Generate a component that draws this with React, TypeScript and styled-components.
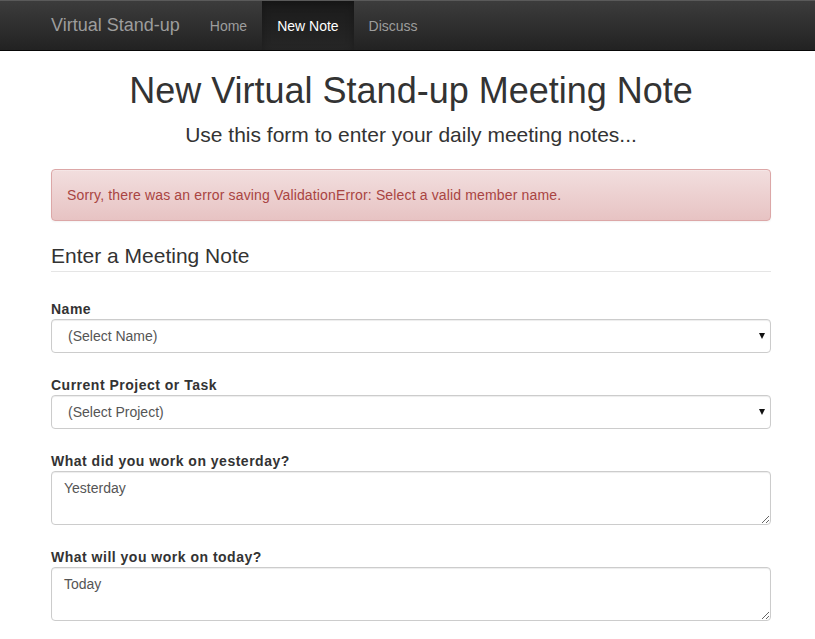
import React from "react";
import styled, { createGlobalStyle } from "styled-components";

const Global = createGlobalStyle`
  html, body { margin: 0; padding: 0; background: #fff; }
  body {
    font-family: "Liberation Sans", Arial, Helvetica, sans-serif;
    font-size: 14px;
    line-height: 20px;
    color: #333;
  }
  * { box-sizing: border-box; }
`;

const Navbar = styled.nav`
  height: 51px;
  background-image: linear-gradient(to bottom, #3c3c3c 0%, #222 100%);
  border-top: 1px solid #5a5a5a;
  border-bottom: 1px solid #080808;
`;

const NavInner = styled.div`
  display: flex;
  align-items: stretch;
  height: 49px;
  margin-left: 36px;
`;

const Brand = styled.a`
  padding: 14px 15px 15px;
  font-size: 18px;
  line-height: 20px;
  color: #9d9d9d;
  text-decoration: none;
`;

const NavLinks = styled.ul`
  display: flex;
  list-style: none;
  margin: 0;
  padding: 0;
`;

const NavLink = styled.a<{ $active?: boolean }>`
  display: block;
  padding: 15px 15px 14px;
  font-size: 14px;
  line-height: 20px;
  text-decoration: none;
  color: ${(p) => (p.$active ? "#fff" : "#9d9d9d")};
  background: ${(p) =>
    p.$active ? "linear-gradient(to bottom, #1b1b1b 0%, #262626 100%)" : "transparent"};
  box-shadow: ${(p) => (p.$active ? "inset 0 3px 9px rgba(0,0,0,.25)" : "none")};
  height: 49px;
`;

const Container = styled.main`
  width: 720px;
  margin-left: 51px;
`;

const Title = styled.h1`
  margin: 20px 0 0;
  font-size: 36px;
  font-weight: 400;
  line-height: 40px;
  text-align: center;
  color: #333;
`;

const Lead = styled.p`
  margin: 10px 0 0;
  font-size: 21px;
  line-height: 28px;
  text-align: center;
  color: #333;
`;

const Alert = styled.div`
  margin-top: 20px;
  padding: 15px;
  border: 1px solid #dca7a7;
  border-radius: 4px;
  background-image: linear-gradient(to bottom, #f2dede 0%, #e7c3c3 100%);
  color: #a94442;
  font-size: 14px;
  line-height: 20px;
  letter-spacing: 0.15px;
  box-shadow: inset 0 1px 0 rgba(255,255,255,.25), 0 1px 2px rgba(0,0,0,.05);
`;

const Fieldset = styled.fieldset`
  margin: 20px 0 0;
  padding: 0;
  border: 0;
  min-width: 0;
`;

const Legend = styled.legend`
  display: block;
  width: 100%;
  padding: 0;
  margin-bottom: 27px;
  font-size: 21px;
  line-height: 30px;
  color: #333;
  border-bottom: 1px solid #e5e5e5;
`;

const FormGroup = styled.div`
  margin-bottom: 22px;
`;

const Label = styled.label`
  display: block;
  margin-bottom: 0;
  font-weight: 700;
  font-size: 14px;
  line-height: 20px;
  letter-spacing: 0.5px;
  color: #333;
`;

const SelectWrap = styled.div`
  position: relative;
  &::after {
    content: "";
    position: absolute;
    right: 6px;
    top: 14px;
    border-left: 3.5px solid transparent;
    border-right: 3.5px solid transparent;
    border-top: 6px solid #111;
    pointer-events: none;
  }
`;

const Select = styled.select`
  display: block;
  width: 100%;
  height: 34px;
  padding: 6px 12px 6px 16px;
  font-family: inherit;
  font-size: 14px;
  line-height: 20px;
  color: #555;
  background: #fff;
  border: 1px solid #ccc;
  border-radius: 4px;
  appearance: none;
  -webkit-appearance: none;
  box-shadow: inset 0 1px 1px rgba(0,0,0,.075);
  outline: none;
`;

const TextArea = styled.textarea`
  display: block;
  width: 100%;
  height: 54px;
  padding: 6px 12px;
  font-family: inherit;
  font-size: 14px;
  line-height: 20px;
  color: #555;
  background: #fff;
  border: 1px solid #ccc;
  border-radius: 4px;
  box-shadow: inset 0 1px 1px rgba(0,0,0,.075);
  outline: none;
  &::placeholder { color: #555; opacity: 1; }
`;

export default function App() {
  return (
    <>
      <Global />
      <Navbar>
        <NavInner>
          <Brand href="#">Virtual Stand-up</Brand>
          <NavLinks>
            <li><NavLink href="#">Home</NavLink></li>
            <li><NavLink href="#" $active>New Note</NavLink></li>
            <li><NavLink href="#">Discuss</NavLink></li>
          </NavLinks>
        </NavInner>
      </Navbar>
      <Container>
        <Title>New Virtual Stand-up Meeting Note</Title>
        <Lead>Use this form to enter your daily meeting notes...</Lead>
        <Alert>Sorry, there was an error saving ValidationError: Select a valid member name.</Alert>
        <Fieldset>
          <Legend>Enter a Meeting Note</Legend>
          <FormGroup>
            <Label>Name</Label>
            <SelectWrap>
              <Select defaultValue="">
                <option value="">(Select Name)</option>
              </Select>
            </SelectWrap>
          </FormGroup>
          <FormGroup>
            <Label>Current Project or Task</Label>
            <SelectWrap>
              <Select defaultValue="">
                <option value="">(Select Project)</option>
              </Select>
            </SelectWrap>
          </FormGroup>
          <FormGroup>
            <Label>What did you work on yesterday?</Label>
            <TextArea rows={2} placeholder="Yesterday" />
          </FormGroup>
          <FormGroup>
            <Label>What will you work on today?</Label>
            <TextArea rows={2} placeholder="Today" />
          </FormGroup>
        </Fieldset>
      </Container>
    </>
  );
}
